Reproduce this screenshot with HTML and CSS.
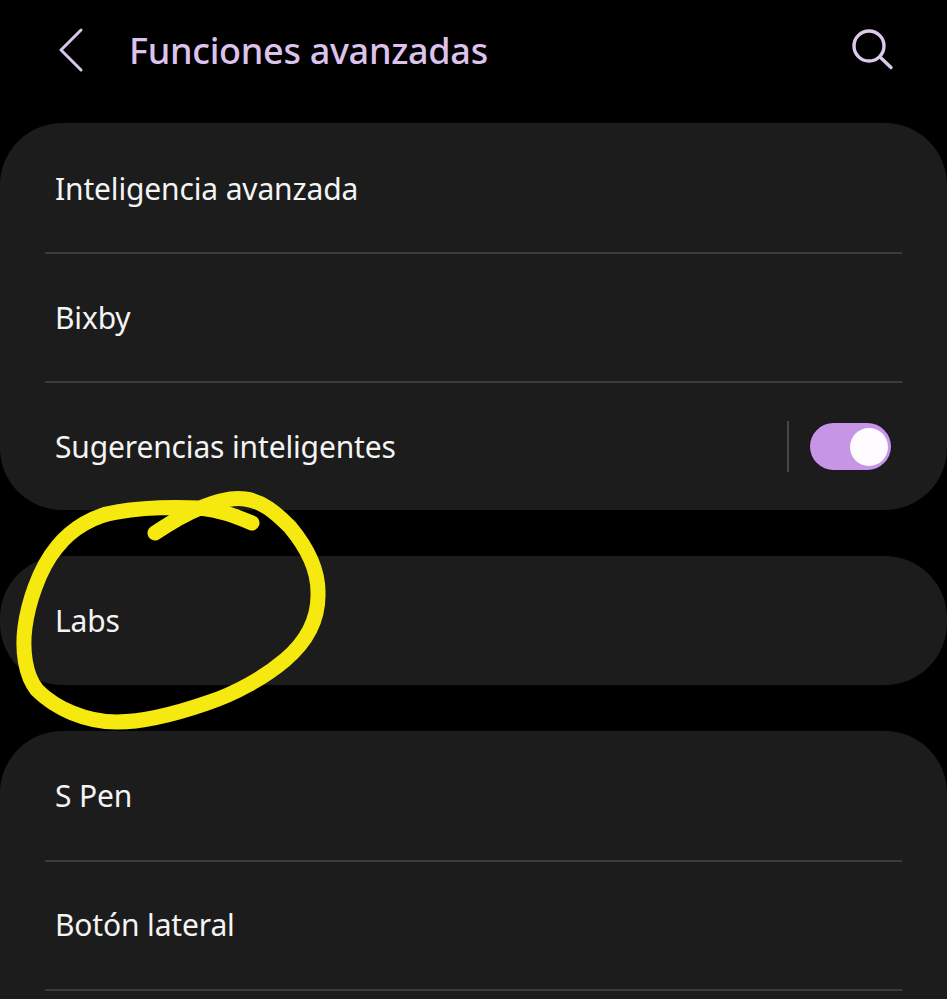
FILE: index.html
```html
<!DOCTYPE html>
<html lang="es">
<head>
<meta charset="utf-8">
<title>Funciones avanzadas</title>
<link rel="stylesheet" href="styles.css">
</head>
<body>
<div class="screen">
  <header class="topbar">
    <svg class="back" width="26" height="44" viewBox="0 0 26 44"><path d="M23 2 L3 22 L23 42"/></svg>
    <h1 class="title">Funciones avanzadas</h1>
    <svg class="search" width="44" height="44" viewBox="0 0 44 44"><circle cx="19" cy="18" r="15"/><path d="M30 29 L41 39.5"/></svg>
  </header>
  <section class="card card-main">
    <div class="row"><span class="label">Inteligencia avanzada</span></div>
    <div class="row"><span class="label">Bixby</span></div>
    <div class="row"><span class="label">Sugerencias inteligentes</span>
      <div class="switch-wrap"><span class="vline"></span><span class="switch"><span class="knob"></span></span></div>
    </div>
  </section>
  <section class="card">
    <div class="row"><span class="label">Labs</span></div>
  </section>
  <section class="card card-open">
    <div class="row"><span class="label">S Pen</span></div>
    <div class="row"><span class="label">Botón lateral</span></div>
    <div class="row"></div>
  </section>
  <svg class="scribble" width="947" height="999" viewBox="0 0 947 999"><path d="M155 533 C170 523 185 514 200 508 C215 502 230 497 245 499 C262 501 275 512 290 527 C305 545 318 568 318 592 C319 620 305 643 285 660 C265 677 235 694 207 703 C175 714 145 722 117 722 C85 722 55 708 37 690 C25 675 22 650 25 627 C28 605 38 570 57 547 C72 528 95 515 117 512 C145 507 175 507 200 508 C220 510 235 516 252 523"/></svg>
</div>
</body>
</html>
```
FILE: styles.css
```css
* { box-sizing: border-box; }
html, body { margin: 0; padding: 0; background: #000; }
.screen {
  position: relative;
  width: 947px;
  height: 999px;
  overflow: hidden;
  background: #000;
  display: flex;
  flex-direction: column;
  gap: 46px;
  font-family: "Noto Sans", "Open Sans", sans-serif;
}
.topbar {
  height: 123px;
  margin-bottom: -46px;
  padding: 0 53px 23px 58px;
  display: flex;
  align-items: center;
  flex-shrink: 0;
}
.back { fill: none; stroke: #dcc5ec; stroke-width: 3; stroke-linecap: round; stroke-linejoin: round; }
.title {
  margin: 0 0 0 45px;
  flex: 1;
  font-size: 36px;
  font-weight: 500;
  color: #dcc3ee;
  letter-spacing: -0.3px;
}
.search { fill: none; stroke: #dcc9ec; stroke-width: 3.4; stroke-linecap: round; }
.card {
  background: #1c1c1c;
  border-radius: 62px;
  padding: 0 45px;
  flex-shrink: 0;
}
.card-open { padding-bottom: 60px; }
.row {
  position: relative;
  height: 129px;
  display: flex;
  align-items: center;
  padding: 0 11px 0 10px;
}
.card-main .row { padding-top: 2px; }
.row::after {
  content: "";
  position: absolute;
  left: 0;
  right: 0;
  bottom: -2px;
  height: 2px;
  background: #3b3b3b;
}
.card > .row:last-child::after { display: none; }
.label { flex: 1; font-size: 30px; color: #f4f4f4; letter-spacing: -0.15px; }
.switch-wrap { display: flex; align-items: center; gap: 21px; }
.vline { width: 2px; height: 51px; background: #464646; }
.switch {
  width: 81px;
  height: 47px;
  border-radius: 24px;
  background: #c795e6;
  box-shadow: 0 0 0 1px #1f1329;
  display: flex;
  align-items: center;
  justify-content: flex-end;
  padding-right: 3px;
}
.knob { width: 38px; height: 38px; border-radius: 50%; background: #fffcff; }
.scribble { position: absolute; left: 0; top: 0; fill: none; stroke: #f6e90f; stroke-width: 15; stroke-linecap: round; stroke-linejoin: round; }
```
